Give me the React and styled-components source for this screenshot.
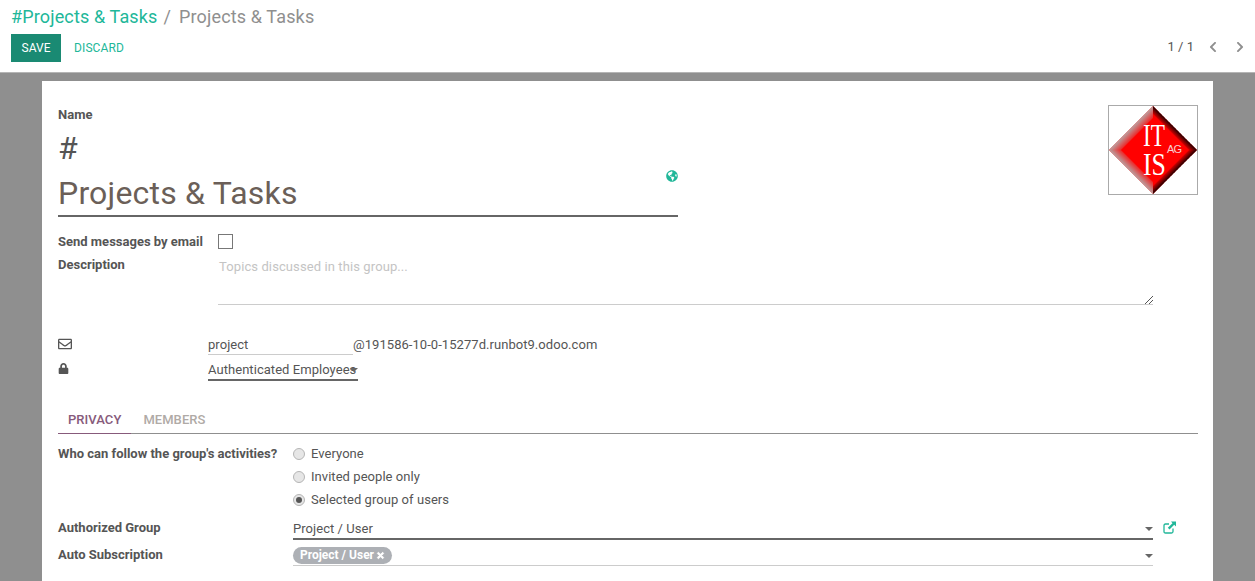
import React from 'react'
import styled, { createGlobalStyle } from 'styled-components'
import { FaRegEnvelope, FaLock, FaGlobeAmericas, FaTimes, FaChevronLeft, FaChevronRight } from 'react-icons/fa'

const Global = createGlobalStyle`
  html, body { margin: 0; padding: 0; height: 100%; overflow: hidden; }
  body { font-family: Roboto, "Liberation Sans", sans-serif; font-size: 13px; letter-spacing: 0.05px; color: #555; background: #fff; }
`

const Page = styled.div`
  width: 1255px;
  height: 581px;
  overflow: hidden;
  display: flex;
  flex-direction: column;
`
const ControlPanel = styled.header`
  height: 73px;
  flex: none;
  box-sizing: border-box;
  padding: 5px 11px 0;
  background: #fff;
  border-bottom: 1px solid #b5b5b5;
`
const Breadcrumb = styled.div`
  display: flex;
  align-items: center;
  height: 24px;
  font-size: 18px;
  letter-spacing: 0.14px;
  line-height: 24px;
  color: #8f8f8f;
`
const CrumbLink = styled.span`
  color: #21b799;
`
const CrumbSep = styled.span`
  margin: 0 8px 0 6px;
`
const ButtonRow = styled.div`
  display: flex;
  align-items: center;
  margin-top: 5px;
`
const SaveButton = styled.button`
  width: 50px;
  height: 28px;
  padding: 0;
  border: 0;
  background: #1a8a73;
  color: #fff;
  font: 12px Roboto, sans-serif;
`
const DiscardButton = styled.button`
  margin-left: 13px;
  padding: 0;
  border: 0;
  background: none;
  color: #21b799;
  font: 12px Roboto, sans-serif;
  letter-spacing: 0.12px;
`
const Pager = styled.div`
  margin-left: auto;
  margin-right: -2px;
  margin-bottom: 3px;
  display: flex;
  align-items: center;
  color: #555;
  font-size: 13px;
  letter-spacing: 0;
  svg { color: #8f8f8f; font-size: 12px; }
`
const PagerValue = styled.span`
  margin-right: 13px;
`
const PagerNext = styled.span`
  display: flex;
  margin-left: 15px;
`
const Backdrop = styled.main`
  flex: 1;
  min-height: 0;
  background: #8f8f8f;
  padding: 8px 42px 0;
`
const Sheet = styled.section`
  position: relative;
  width: 1171px;
  height: 600px;
  box-sizing: border-box;
  padding: 26px 15px 0 16px;
  background: #fff;
`
const Logo = styled.div`
  float: right;
  width: 90px;
  height: 90px;
  box-sizing: border-box;
  margin-top: -2px;
  border: 1px solid #aaa;
  svg { display: block; }
`
const FieldLabel = styled.label`
  display: block;
  font-weight: 700;
  line-height: 16px;
  letter-spacing: 0;
  color: #555;
`
const TitleBlock = styled.div`
  position: relative;
  width: 620px;
  margin-top: 2px;
`
const Hash = styled.div`
  font-size: 32px;
  line-height: 46px;
  height: 47px;
  color: #555;
`
const TitleName = styled.div`
  height: 43px;
  font-size: 32px;
  letter-spacing: 0.2px;
  line-height: 43px;
  color: #6b5f58;
  border-bottom: 2px solid #666;
`
const Globe = styled.span`
  position: absolute;
  right: 0;
  top: 45px;
  color: #21b799;
  font-size: 12px;
  display: flex;
`
const Row = styled.div`
  display: flex;
  align-items: center;
  height: ${p => p.$h || 23}px;
`
const RowLabel = styled(FieldLabel)`
  width: ${p => p.$w || 160}px;
  flex: none;
`
const Checkbox = styled.span`
  width: 13px;
  height: 13px;
  border: 1px solid #777;
  background: #fff;
`
const SendRow = styled(Row)`
  margin-top: 13px;
  height: 23px;
`
const DescriptionRow = styled.div`
  display: flex;
  align-items: flex-start;
`
const DescLabel = styled(RowLabel)`
  margin-top: 4px;
`
const TextArea = styled.div`
  position: relative;
  width: 935px;
  height: 52px;
  box-sizing: border-box;
  padding: 6px 0 0 1px;
  line-height: 16px;
  letter-spacing: 0.1px;
  color: #c4c4c4;
  border-bottom: 1px solid #ccc;
`
const Grip = styled.svg`
  position: absolute;
  right: 0;
  bottom: 0;
`
const AliasRow = styled(Row)`
  margin-top: 27px;
  height: 25px;
`
const IconCell = styled.span`
  width: 150px;
  flex: none;
  display: flex;
  font-size: 14px;
  color: #555;
  transform: translateY(-1px);
`
const AliasInput = styled.span`
  width: 145px;
  box-sizing: border-box;
  height: 21px;
  line-height: 21px;
  border-bottom: 1px solid #ccc;
`
const SelectField = styled.span`
  position: relative;
  display: block;
  width: ${p => p.$w || 150}px;
  box-sizing: border-box;
  height: ${p => p.$h || 22}px;
  line-height: 22px;
  border-bottom: ${p => p.$light ? '1px solid #ccc' : '2px solid #666'};
  white-space: nowrap;
`
const Caret = styled.i`
  position: absolute;
  right: 0;
  top: 9px;
  width: 0;
  height: 0;
  border-left: 4px solid transparent;
  border-right: 4px solid transparent;
  border-top: 4px solid #666;
`
const Tabs = styled.nav`
  display: flex;
  gap: 2px;
  height: 32px;
  margin-top: 20px;
  box-sizing: border-box;
  border-bottom: 1px solid #8f8f8f;
`
const Tab = styled.span`
  height: 32px;
  box-sizing: border-box;
  padding: 0 10px;
  line-height: 36px;
  font-weight: 500;
  font-size: 13px;
  color: ${p => p.$active ? '#875a7b' : '#b0aaa6'};
  border-bottom: ${p => p.$active ? '1px solid #875a7b' : '0'};
  text-transform: uppercase;
`
const PrivacyGroup = styled.div`
  display: flex;
  margin-top: 8px;
`
const PrivacyLabel = styled(RowLabel)`
  margin-top: 4px;
`
const RadioList = styled.div`
  display: flex;
  flex-direction: column;
`
const RadioRow = styled.div`
  display: flex;
  align-items: center;
  height: 23px;
  line-height: 23px;
`
const Radio = styled.span`
  position: relative;
  width: 12px;
  height: 12px;
  margin-right: 6px;
  box-sizing: border-box;
  border-radius: 50%;
  border: 1px solid #b5b5b5;
  background: #e6e6e6;
  &::after {
    content: '';
    display: ${p => p.$checked ? 'block' : 'none'};
    position: absolute;
    left: 2px;
    top: 2px;
    width: 6px;
    height: 6px;
    border-radius: 50%;
    background: #555;
  }
`
const RelationRow = styled(Row)`
  height: 27px;
`
const AuthRow = styled(RelationRow)`
  margin-top: 4px;
`
const RelationLabel = styled(RowLabel)`
  margin-bottom: 2px;
`
const ExternalLink = styled.svg`
  margin-left: 10px;
  margin-top: -3px;
  color: #21b799;
`
const TagPill = styled.span`
  position: absolute;
  left: 0;
  top: 2px;
  display: inline-flex;
  align-items: center;
  gap: 2px;
  height: 17px;
  padding: 0 7px 0 7px;
  border-radius: 9px;
  background: #adb0b5;
  color: #fff;
  font-size: 12px;
  font-weight: 700;
  letter-spacing: 0;
  line-height: 17px;
  svg { font-size: 9px; stroke: #fff; stroke-width: 50; }
`

function LogoMark() {
  return (
    <svg width="88" height="88" viewBox="0 0 88 88">
      <defs>
        <linearGradient id="edgeUpper" gradientUnits="userSpaceOnUse" x1="22" y1="22" x2="30" y2="30">
          <stop offset="0%" stopColor="#b8a0a0" />
          <stop offset="100%" stopColor="#ff0000" />
        </linearGradient>
        <linearGradient id="edgeLower" gradientUnits="userSpaceOnUse" x1="22" y1="66" x2="30" y2="58">
          <stop offset="0%" stopColor="#b8a0a0" />
          <stop offset="100%" stopColor="#ff0000" />
        </linearGradient>
        <linearGradient id="edgeRightUp" gradientUnits="userSpaceOnUse" x1="66" y1="22" x2="61" y2="27">
          <stop offset="0%" stopColor="#200000" />
          <stop offset="100%" stopColor="#ff0000" />
        </linearGradient>
        <linearGradient id="edgeRightDown" gradientUnits="userSpaceOnUse" x1="66" y1="66" x2="61" y2="61">
          <stop offset="0%" stopColor="#200000" />
          <stop offset="100%" stopColor="#ff0000" />
        </linearGradient>
      </defs>
      <polygon points="44,0 88,44 44,88 0,44" fill="#ff0000" />
      <polygon points="44,0 0,44 12,44 44,12" fill="url(#edgeUpper)" />
      <polygon points="0,44 44,88 44,76 12,44" fill="url(#edgeLower)" />
      <polygon points="44,0 88,44 80,44 44,8" fill="url(#edgeRightUp)" />
      <polygon points="44,88 88,44 80,44 44,80" fill="url(#edgeRightDown)" />
      <path d="M50 6 L82 38 M82 50 L54 78" stroke="#b08080" strokeWidth="0.8" strokeDasharray="2 2" fill="none" />
      <text x="34" y="40" fontFamily="Liberation Serif, serif" fontSize="32" fill="#fff" textLength="22" lengthAdjust="spacingAndGlyphs">IT</text>
      <text x="34" y="69" fontFamily="Liberation Serif, serif" fontSize="32" fill="#fff" textLength="23" lengthAdjust="spacingAndGlyphs">IS</text>
      <text x="58" y="47" fontFamily="Liberation Sans, sans-serif" fontSize="11" fill="#f8d0d0" textLength="15">AG</text>
    </svg>
  )
}

export default function App() {
  return (
    <Page>
      <Global />
      <ControlPanel>
        <Breadcrumb>
          <CrumbLink>#Projects &amp; Tasks</CrumbLink>
          <CrumbSep>/</CrumbSep>
          <span>Projects &amp; Tasks</span>
        </Breadcrumb>
        <ButtonRow>
          <SaveButton>SAVE</SaveButton>
          <DiscardButton>DISCARD</DiscardButton>
          <Pager>
            <PagerValue>1 / 1</PagerValue>
            <FaChevronLeft />
            <PagerNext><FaChevronRight /></PagerNext>
          </Pager>
        </ButtonRow>
      </ControlPanel>
      <Backdrop>
        <Sheet>
          <Logo><LogoMark /></Logo>
          <FieldLabel>Name</FieldLabel>
          <TitleBlock>
            <Hash>#</Hash>
            <TitleName>Projects &amp; Tasks</TitleName>
            <Globe><FaGlobeAmericas /></Globe>
          </TitleBlock>
          <SendRow>
            <RowLabel>Send messages by email</RowLabel>
            <Checkbox />
          </SendRow>
          <DescriptionRow>
            <DescLabel>Description</DescLabel>
            <TextArea>
              Topics discussed in this group...
              <Grip width="8" height="8" viewBox="0 0 8 8">
                <path d="M0 8 L8 0 M4 8 L8 4" stroke="#555" strokeWidth="1" fill="none" />
              </Grip>
            </TextArea>
          </DescriptionRow>
          <AliasRow>
            <IconCell><FaRegEnvelope /></IconCell>
            <AliasInput>project</AliasInput>
            <span>@191586-10-0-15277d.runbot9.odoo.com</span>
          </AliasRow>
          <Row $h={25}>
            <IconCell><FaLock size={11} /></IconCell>
            <SelectField>Authenticated Employees<Caret /></SelectField>
          </Row>
          <Tabs>
            <Tab $active>Privacy</Tab>
            <Tab>Members</Tab>
          </Tabs>
          <PrivacyGroup>
            <PrivacyLabel $w={235}>Who can follow the group's activities?</PrivacyLabel>
            <RadioList>
              <RadioRow><Radio />Everyone</RadioRow>
              <RadioRow><Radio />Invited people only</RadioRow>
              <RadioRow><Radio $checked />Selected group of users</RadioRow>
            </RadioList>
          </PrivacyGroup>
          <AuthRow>
            <RelationLabel $w={235}>Authorized Group</RelationLabel>
            <SelectField $w={860}>Project / User<Caret /></SelectField>
            <ExternalLink width="13" height="13" viewBox="0 0 13 13">
              <path d="M10 7.5 V10.5 Q10 12 8.5 12 H2.5 Q1 12 1 10.5 V4.5 Q1 3 2.5 3 H6" stroke="currentColor" strokeWidth="1.3" fill="none" />
              <path d="M8 0.5 H13 V5.5 L11.2 3.8 L6.5 8.5 L4.8 6.8 L9.5 2.2 Z" fill="currentColor" />
            </ExternalLink>
          </AuthRow>
          <RelationRow>
            <RelationLabel $w={235}>Auto Subscription</RelationLabel>
            <SelectField $w={860} $h={21} $light>
              <TagPill>Project / User <FaTimes /></TagPill>
              <Caret />
            </SelectField>
          </RelationRow>
        </Sheet>
      </Backdrop>
    </Page>
  )
}
